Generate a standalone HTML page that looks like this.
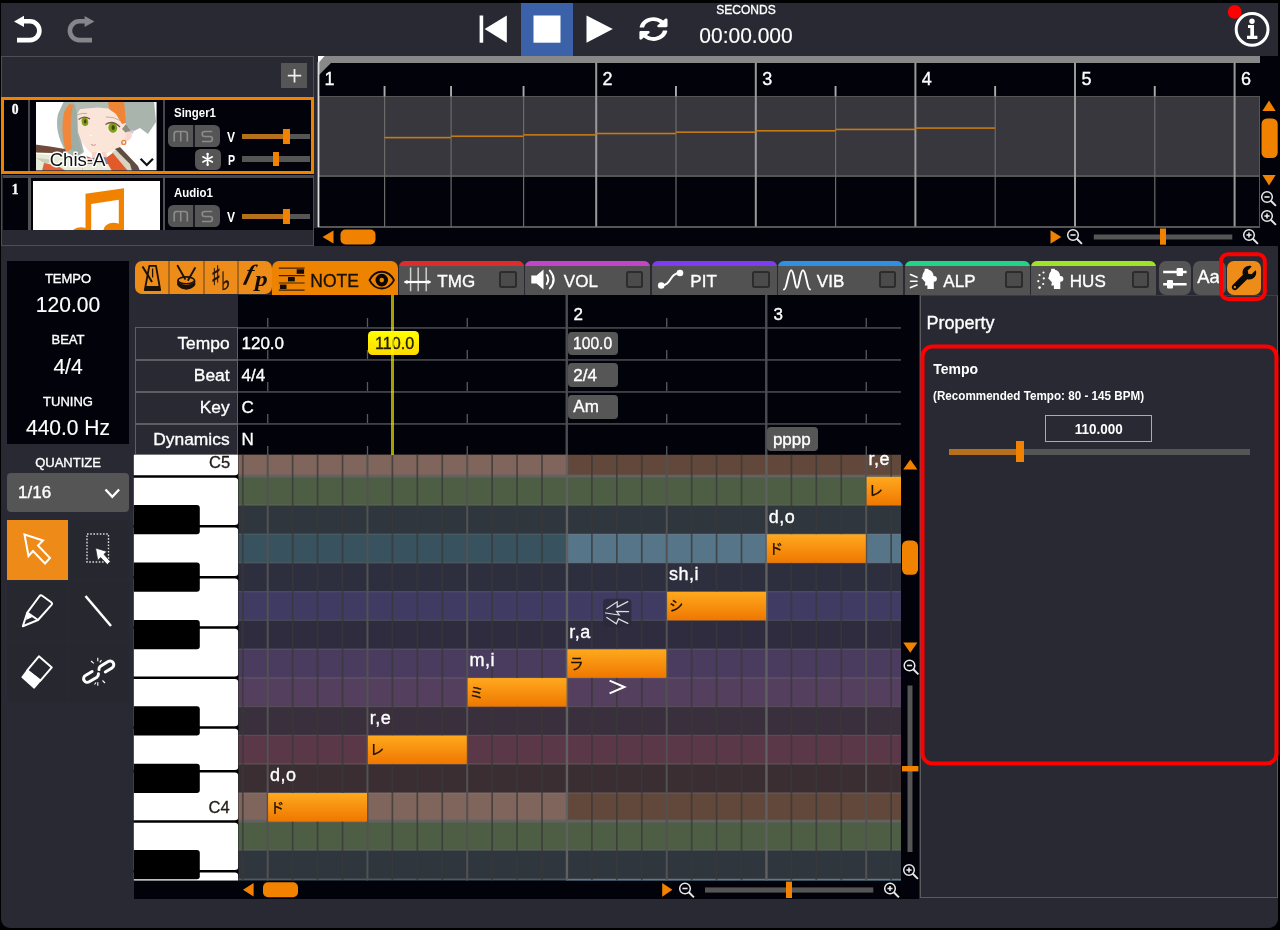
<!DOCTYPE html><html><head><meta charset="utf-8"><title>Editor</title><style>
*{box-sizing:border-box;margin:0;padding:0}
html,body{width:1280px;height:930px;overflow:hidden;background:#000003}
body{font-family:"Liberation Sans","Noto Sans CJK JP",sans-serif;color:#fff;position:relative}
.a{position:absolute}
#app{position:absolute;left:1.4px;top:2.6px;width:1277px;height:925.3px;background:#282932;border-radius:0 0 9px 9px;overflow:hidden}
.t{position:absolute;white-space:nowrap;line-height:1;-webkit-text-stroke:0.35px currentColor}
text.w{stroke:#fff;stroke-width:0.35px}
text.d{stroke:#1a1000;stroke-width:0.3px}
.c{text-align:center}
.blk{background:#02020a}
svg{position:absolute;overflow:visible}
</style></head><body>
<div id="root" style="position:absolute;left:0;top:0;width:1280px;height:930px;will-change:transform">
<div id="app"></div>
<div class="a" style="left:521px;top:3px;width:52px;height:52.5px;background:#3b62a8;"></div>
<svg style="left:0;top:0" width="1280" height="60" viewBox="0 0 1280 60">
<g fill="none" stroke="#fff" stroke-width="4.6">
<path d="M23 21.3 H30 A9.4 9.4 0 0 1 30 40.1 H17"/>
</g>
<path d="M14 21.4 L24 15.8 V27 Z" fill="#fff"/>
<g fill="none" stroke="#85858c" stroke-width="4.6">
<path d="M85.5 21.3 H79.3 A9.4 9.4 0 0 0 79.3 40.1 H92"/>
</g>
<path d="M94.4 21.4 L84.6 16 V27 Z" fill="#85858c"/>
<rect x="479.6" y="15.5" width="3.6" height="27.2" fill="#fff"/>
<path d="M484.6 29.1 L506.8 15.5 V42.7 Z" fill="#fff"/>
<rect x="533.5" y="15.5" width="27" height="27.2" fill="#fff"/>
<path d="M586.5 15.5 L612.8 29.1 L586.5 42.7 Z" fill="#fff"/>
<g transform="translate(638.95,16.9) scale(0.0567,0.0476)" fill="#fff"><path d="M370.72 133.28C339.458 104.008 298.888 87.962 255.848 88c-77.458.068-144.328 53.178-162.791 126.85-1.344 5.363-6.122 9.15-11.651 9.15H24.103c-7.498 0-13.194-6.807-11.807-14.176C33.933 94.924 134.813 8 256 8c66.448 0 126.791 26.136 171.315 68.685L463.03 40.97C478.149 25.851 504 36.559 504 57.941V192c0 13.255-10.745 24-24 24H345.941c-21.382 0-32.09-25.851-16.971-40.971l41.75-41.749zM32 296h134.059c21.382 0 32.09 25.851 16.971 40.971l-41.75 41.75c31.262 29.273 71.835 45.319 114.876 45.28 77.418-.07 144.315-53.144 162.787-126.849 1.344-5.363 6.122-9.15 11.651-9.15h57.304c7.498 0 13.194 6.807 11.807 14.176C478.067 417.076 377.187 504 256 504c-66.448 0-126.791-26.136-171.315-68.685L48.97 471.03C33.851 486.149 8 475.441 8 454.059V320c0-13.255 10.745-24 24-24z"/></g>
<circle cx="1234.7" cy="11.9" r="6.9" fill="#ff0000"/>
<circle cx="1252.1" cy="29.4" r="15.9" fill="none" stroke="#fff" stroke-width="3"/>
<circle cx="1252" cy="21.3" r="2.7" fill="#fff"/>
<path d="M1248 25 H1254 V35.8 H1257.4 V39 H1247 V35.8 H1250.3 V28 H1248 Z" fill="#fff"/>
</svg>
<div class="t" style="left:686px;top:4px;font-size:12px;color:#fff;width:120px;text-align:center;">SECONDS</div>
<div class="t" style="left:686px;top:24.9px;font-size:22px;color:#fff;width:120px;text-align:center;-webkit-text-stroke:0.15px #fff;transform:scaleX(0.955);">00:00.000</div>
<div class="a" style="left:1.2px;top:56px;width:313.2px;height:189.8px;background:transparent;border:1.5px solid #4e4e52;border-top-width:1.2px"></div>
<div class="a" style="left:281.4px;top:63.1px;width:25.4px;height:25.2px;background:#555;"></div>
<svg style="left:281.5px;top:63px" width="25" height="25"><path d="M12.5 6 V19.5 M5.8 12.7 H19.2" stroke="#eee" stroke-width="1.8" fill="none"/></svg>
<div class="a" style="left:2px;top:97px;width:312px;height:77.5px;background:#02020a;"></div>
<div class="a" style="left:28.1px;top:100px;width:2.2px;height:72px;background:#45454a;"></div>
<div class="a" style="left:162.7px;top:100px;width:2px;height:72px;background:#45454a;"></div>
<svg style="left:36.1px;top:101.6px" width="120.6" height="68.2" viewBox="0 0 120.6 68.2">
<defs><clipPath id="av"><rect width="120.6" height="68.2"/></clipPath><filter id="bl" x="-5%" y="-5%" width="110%" height="110%"><feGaussianBlur stdDeviation="0.55"/></filter></defs>
<rect width="120.6" height="68.2" fill="#fff"/>
<g clip-path="url(#av)"><g filter="url(#bl)">
<path d="M28 -1 L50 -1 L46 10 L43 30 L48 50 L40 56 L30 50 Q18 30 22 12 Z" fill="#a9b6ad"/>
<path d="M33 2 L38 3 Q33 22 36 47 L30 50 Q24 30 28 10 Z" fill="#f0873a"/>
<path d="M37 2 L43 6 L41 30 L46 50 L41 54 L36 47 Q33 24 37 2 Z" fill="#9dada5"/>
<path d="M41 8 Q56 2 74 6 L90 22 L92 36 Q84 48 66 53 L56 52 Q46 44 42 30 Z" fill="#fbe5d9"/>
<path d="M56 50 L70 50 L72 58 L56 58 Z" fill="#f4d4c4"/>
<path d="M38 -1 L80 -1 L78 7 L62 5.5 L44 7 L41 12 Z" fill="#b2bcb2"/>
<path d="M72 -1 L90 -1 L90 21 L86 22 L80 12 L73 7 Z" fill="#f08434"/>
<path d="M88 -1 L118 -1 L120 20 L112 32 L104 26 L96 30 L90 22 Z" fill="#a9b5ac"/>
<path d="M90 22 L96 30 L92 33 L86 27 Z" fill="#8d8e80"/>
<path d="M90 30 Q96 28 96 34 Q94 40 89 39 Z" fill="#f6d9cc"/>
<path d="M93 29 L98 28 L97 32 Z" fill="#d8c8e8"/>
<ellipse cx="48.9" cy="19.6" rx="3.3" ry="4.4" fill="#80a01c" transform="rotate(-10 48.9 19.6)"/>
<ellipse cx="76.8" cy="25.8" rx="4.4" ry="5" fill="#7e9e1a" transform="rotate(-10 76.8 25.8)"/>
<ellipse cx="49.2" cy="19.4" rx="1.3" ry="2.2" fill="#3c4a10"/>
<ellipse cx="77.2" cy="25.6" rx="1.6" ry="2.5" fill="#3c4a10"/>
<path d="M42.6 17.5 Q48 12.8 54 17" stroke="#7a5546" stroke-width="1.2" fill="none"/>
<path d="M69.5 22.5 Q77 17.6 84 25" stroke="#7a5546" stroke-width="1.3" fill="none"/>
<path d="M41 13 Q46 10.5 51 11.5" stroke="#a0a89c" stroke-width="0.8" fill="none"/>
<path d="M70 15 Q78 14.5 84 18.5" stroke="#a0a89c" stroke-width="0.8" fill="none"/>
<circle cx="54.8" cy="33.3" r="0.9" fill="#fff"/>
<path d="M55 42.6 q2.4 1.4 4.8 0.2" stroke="#d48c84" stroke-width="1" fill="none"/>
<circle cx="87.8" cy="40.4" r="2" fill="none" stroke="#e8813c" stroke-width="1.3"/>
<path d="M-1 42.6 L14 44.4 L29 47 L31 52 L16 51 L-1 50.6 Z" fill="#6f4c3b"/>
<path d="M-1 52 L20 53 L40 56 L52 60 L52 69 L-1 69 Z" fill="#e6ead6"/>
<path d="M0 56 L18 58 L10 62 Z" fill="#c8ccb8"/>
<path d="M8 61 L22 64 L30 69 L6 69 Z" fill="#e0623a"/>
<path d="M50 54 L58 57 L70 56 L78 50 L92 60 L96 69 L46 69 Z" fill="#e25a2c"/>
<path d="M56 56 L70 55 L72 61 L56 62 Z" fill="#8a80a8"/>
<path d="M48 62 L72 62 L76 69 L46 69 Z" fill="#e9ecd9"/>
<path d="M79 47 L84 45 L102 64 L104 69 L96 69 L90 60 Z" fill="#5e4d42"/>
<path d="M76 50 L80 48 L94 62 L96 69 L92 69 Z" fill="#d8d4c4"/>
</g>
<text x="13.7" y="64.3" font-family="Liberation Sans, sans-serif" font-size="18.6" fill="#111" stroke="#fff" stroke-width="2.8" stroke-linejoin="round" paint-order="stroke">Chis-A</text>
<path d="M104.6 56.8 L110.8 63 L117 56.8" stroke="#111" stroke-width="2.2" fill="none"/>
</g></svg>
<div class="a" style="left:1px;top:96.6px;width:313.2px;height:77.4px;border:3px solid #f08200;"></div>
<div class="t" style="left:11.8px;top:103.3px;font-size:13.6px;color:#fff;font-family:'Liberation Serif',serif;font-weight:bold;">0</div>
<div class="t" style="left:174.3px;top:106.3px;font-size:13px;font-weight:bold;-webkit-text-stroke:0;transform-origin:0 0;transform:scaleX(0.88)">Singer1</div>
<div class="a" style="left:168px;top:125.3px;width:52.2px;height:21.8px;background:#555;border-radius:5.5px"></div>
<div class="a" style="left:192.7px;top:125.3px;width:2px;height:21.8px;background:#1c1c22;"></div>
<svg style="left:168px;top:125.3px" width="53" height="22"><g fill="none" stroke="#8c8c8c" stroke-width="1.6" stroke-linejoin="round"><path d="M6.2 16.4 V9 Q6.2 6.5 8.7 6.5 H16.8 Q19.3 6.5 19.3 9 V16.4 M12.75 6.5 V16.4"/><path d="M44.2 6.5 H36.6 Q34.2 6.5 34.2 9 Q34.2 11.5 36.6 11.5 H42 Q44.4 11.5 44.4 14 Q44.4 16.5 42 16.5 H34"/></g></svg>
<div class="a" style="left:195.2px;top:148.6px;width:25.4px;height:21.4px;background:#555;border-radius:5.5px"></div>
<svg style="left:195px;top:148.5px" width="26" height="21"><g stroke="#fff" stroke-width="1.7" fill="none" stroke-linecap="round"><path d="M12.6 5 V15.8 M7.9 7.8 L17.3 13 M17.3 7.8 L7.9 13"/></g><circle cx="12.6" cy="5" r="1.2" fill="#fff"/><circle cx="12.6" cy="15.8" r="1.2" fill="#fff"/></svg>
<div class="t" style="left:227px;top:130px;font-size:14.4px;font-weight:bold;-webkit-text-stroke:0;transform-origin:0 0;transform:scaleX(0.84)">V</div>
<div class="t" style="left:227.6px;top:152.6px;font-size:14.4px;font-weight:bold;-webkit-text-stroke:0;transform-origin:0 0;transform:scaleX(0.74)">P</div>
<div class="a" style="left:242px;top:134px;width:68px;height:5.4px;background:#555;"></div>
<div class="a" style="left:242px;top:134px;width:42px;height:5.4px;background:#b5701e;"></div>
<div class="a" style="left:283.2px;top:129.45px;width:6.8px;height:14.5px;background:#f08200;"></div>
<div class="a" style="left:242px;top:156.2px;width:68px;height:5.4px;background:#555;"></div>
<div class="a" style="left:272.6px;top:151.79999999999998px;width:6.8px;height:14.2px;background:#f08200;"></div>
<div class="a" style="left:2.5px;top:174.5px;width:310.5px;height:3.4px;background:#47474c;"></div>
<div class="a" style="left:3px;top:177.6px;width:310px;height:52.4px;background:#02020a;"></div>
<div class="a" style="left:28.1px;top:177px;width:2.6px;height:53px;background:#505055;"></div>
<div class="a" style="left:162.6px;top:177px;width:2.6px;height:53px;background:#505055;"></div>
<div class="t" style="left:11.8px;top:182.6px;font-size:13.6px;color:#fff;font-family:'Liberation Serif',serif;font-weight:bold;">1</div>
<div class="a" style="left:33px;top:180.5px;width:127px;height:49.5px;background:#fff;overflow:hidden"><svg style="left:0;top:0" width="127" height="50" viewBox="33 180.5 127 50"><path fill="#f08200" d="M85.5 193.3 L124 187.8 V231 H118.8 V199.3 L91.2 203.4 V236 H85.5 Z"/><ellipse cx="81" cy="234.5" rx="10.3" ry="7.8" fill="#f08200"/><ellipse cx="113.7" cy="230" rx="10.3" ry="7.8" fill="#f08200"/></svg></div>
<div class="t" style="left:174.3px;top:186px;font-size:13px;font-weight:bold;-webkit-text-stroke:0;transform-origin:0 0;transform:scaleX(0.88)">Audio1</div>
<div class="a" style="left:168px;top:205.2px;width:52.2px;height:21.8px;background:#555;border-radius:5.5px"></div>
<div class="a" style="left:192.7px;top:205.2px;width:2px;height:21.8px;background:#1c1c22;"></div>
<svg style="left:168px;top:205.2px" width="53" height="22"><g fill="none" stroke="#8c8c8c" stroke-width="1.6" stroke-linejoin="round"><path d="M6.2 16.4 V9 Q6.2 6.5 8.7 6.5 H16.8 Q19.3 6.5 19.3 9 V16.4 M12.75 6.5 V16.4"/><path d="M44.2 6.5 H36.6 Q34.2 6.5 34.2 9 Q34.2 11.5 36.6 11.5 H42 Q44.4 11.5 44.4 14 Q44.4 16.5 42 16.5 H34"/></g></svg>
<div class="t" style="left:227px;top:209.7px;font-size:14.4px;font-weight:bold;-webkit-text-stroke:0;transform-origin:0 0;transform:scaleX(0.84)">V</div>
<div class="a" style="left:242px;top:213.6px;width:68px;height:5.4px;background:#555;"></div>
<div class="a" style="left:242px;top:213.6px;width:42px;height:5.4px;background:#b5701e;"></div>
<div class="a" style="left:283.2px;top:209.04999999999998px;width:6.8px;height:14.5px;background:#f08200;"></div>
<div class="a" style="left:317.8px;top:56px;width:962.2px;height:172px;background:#02020a;"></div>
<div class="a" style="left:314.2px;top:227.5px;width:965.8px;height:18.5px;background:#02020a;"></div>
<div class="a" style="left:318px;top:56px;width:942px;height:6.5px;background:#888;"></div>
<div class="a" style="left:318px;top:97px;width:941.5px;height:78.5px;background:#38373e;"></div>
<div class="a" style="left:318px;top:96px;width:941.5px;height:1px;background:#555;"></div>
<div class="a" style="left:318px;top:175px;width:941.5px;height:1.5px;background:#555;"></div>
<div class="a" style="left:318px;top:226px;width:941.5px;height:1.5px;background:#555;"></div>
<div class="a" style="left:1259px;top:97px;width:1px;height:130px;background:#555;"></div>
<svg style="left:0;top:0" width="1280" height="250" viewBox="0 0 1280 250"><path d="M318 56 H338 L318 76 Z" fill="#888"/><path d="M318 56 H324.5 L318 63.5 Z" fill="#fff"/><rect x="317.6" y="62" width="1.8" height="165" fill="#ddd"/><text class="w" x="324.5" y="85" font-size="18" fill="#fff" font-family="Liberation Sans, sans-serif">1</text><rect x="384.0" y="97" width="1.2" height="130" fill="#6a6a6a"/><rect x="383.6" y="86" width="1.9" height="10.5" fill="#aaa"/><rect x="450.5" y="97" width="1.2" height="130" fill="#6a6a6a"/><rect x="450.1" y="86" width="1.9" height="10.5" fill="#aaa"/><rect x="523.0" y="97" width="1.2" height="130" fill="#6a6a6a"/><rect x="522.6" y="86" width="1.9" height="10.5" fill="#aaa"/><rect x="595.2" y="62.5" width="2" height="164" fill="#999"/><text class="w" x="602.6" y="85" font-size="18" fill="#fff" font-family="Liberation Sans, sans-serif">2</text><rect x="675.4" y="97" width="1.2" height="130" fill="#6a6a6a"/><rect x="675.0" y="86" width="1.9" height="10.5" fill="#aaa"/><rect x="754.8" y="62.5" width="2" height="164" fill="#999"/><text class="w" x="762.2" y="85" font-size="18" fill="#fff" font-family="Liberation Sans, sans-serif">3</text><rect x="835.0" y="97" width="1.2" height="130" fill="#6a6a6a"/><rect x="834.6" y="86" width="1.9" height="10.5" fill="#aaa"/><rect x="914.4" y="62.5" width="2" height="164" fill="#999"/><text class="w" x="921.8" y="85" font-size="18" fill="#fff" font-family="Liberation Sans, sans-serif">4</text><rect x="994.6" y="97" width="1.2" height="130" fill="#6a6a6a"/><rect x="994.2" y="86" width="1.9" height="10.5" fill="#aaa"/><rect x="1074.0" y="62.5" width="2" height="164" fill="#999"/><text class="w" x="1081.4" y="85" font-size="18" fill="#fff" font-family="Liberation Sans, sans-serif">5</text><rect x="1154.2" y="97" width="1.2" height="130" fill="#6a6a6a"/><rect x="1153.8" y="86" width="1.9" height="10.5" fill="#aaa"/><rect x="1233.6" y="62.5" width="2" height="164" fill="#999"/><text class="w" x="1241.0" y="85" font-size="18" fill="#fff" font-family="Liberation Sans, sans-serif">6</text><rect x="384.5" y="136.79999999999998" width="66.5" height="1.6" fill="#c87a12"/><rect x="451.0" y="135.43999999999997" width="72.5" height="1.6" fill="#c87a12"/><rect x="523.5" y="134.07999999999998" width="72.6" height="1.6" fill="#c87a12"/><rect x="596.1" y="132.71999999999997" width="79.8" height="1.6" fill="#c87a12"/><rect x="675.9" y="131.35999999999999" width="79.8" height="1.6" fill="#c87a12"/><rect x="755.7" y="129.99999999999997" width="79.8" height="1.6" fill="#c87a12"/><rect x="835.5" y="128.64" width="79.8" height="1.6" fill="#c87a12"/><rect x="915.3" y="127.27999999999999" width="79.8" height="1.6" fill="#c87a12"/></svg>
<svg style="left:0;top:0" width="1280" height="250" viewBox="0 0 1280 250">
<path d="M322.5 237 L333.5 230.5 V243.5 Z" fill="#f08200"/>
<rect x="340.5" y="229.5" width="35" height="15" rx="5" fill="#f08200"/>
<path d="M1061.3 237 L1050.5 230.3 V243.7 Z" fill="#f08200"/>
<rect x="1093.8" y="234.5" width="138.5" height="5" fill="#555"/>
<rect x="1160" y="228.5" width="6" height="16.2" fill="#f08200"/>
<path d="M1269 100.5 L1275.6 111 H1262.4 Z" fill="#f08200"/>
<rect x="1261.5" y="118.5" width="16.2" height="39.5" rx="5.5" fill="#f08200"/>
<path d="M1269 185.5 L1275.6 175 H1262.4 Z" fill="#f08200"/>
</svg>
<svg style="left:0;top:0" width="1280" height="930" viewBox="0 0 1280 930"><g stroke="#e8e8e8" fill="none" stroke-width="1.5"><circle cx="1073" cy="235" r="5.3"/><path d="M1076.816 238.816 L1081.8999999999999 243.9" stroke-width="2"/><path d="M1070.4 235 H1075.6" stroke-width="1.6"/></g></svg>
<svg style="left:0;top:0" width="1280" height="930" viewBox="0 0 1280 930"><g stroke="#e8e8e8" fill="none" stroke-width="1.5"><circle cx="1249" cy="235" r="5.3"/><path d="M1252.816 238.816 L1257.8999999999999 243.9" stroke-width="2"/><path d="M1246.4 235 H1251.6" stroke-width="1.6"/><path d="M1249 232.4 V237.6" stroke-width="1.6"/></g></svg>
<svg style="left:0;top:0" width="1280" height="930" viewBox="0 0 1280 930"><g stroke="#e8e8e8" fill="none" stroke-width="1.5"><circle cx="1267" cy="197" r="5.3"/><path d="M1270.816 200.816 L1275.8999999999999 205.9" stroke-width="2"/><path d="M1264.4 197 H1269.6" stroke-width="1.6"/></g></svg>
<svg style="left:0;top:0" width="1280" height="930" viewBox="0 0 1280 930"><g stroke="#e8e8e8" fill="none" stroke-width="1.5"><circle cx="1267" cy="216" r="5.3"/><path d="M1270.816 219.816 L1275.8999999999999 224.9" stroke-width="2"/><path d="M1264.4 216 H1269.6" stroke-width="1.6"/><path d="M1267 213.4 V218.6" stroke-width="1.6"/></g></svg>
<div class="a" style="left:7px;top:261px;width:122px;height:183px;background:#02020a;"></div>
<div class="t c" style="left:-32px;top:271.6px;width:200px;font-size:13px;">TEMPO</div>
<div class="t c" style="left:-32px;top:294.3px;width:200px;font-size:22px;-webkit-text-stroke:0.15px #fff;transform:scaleX(0.955);">120.00</div>
<div class="t c" style="left:-32px;top:333.3px;width:200px;font-size:13px;">BEAT</div>
<div class="t c" style="left:-32px;top:355.5px;width:200px;font-size:22px;-webkit-text-stroke:0.15px #fff;transform:scaleX(0.955);">4/4</div>
<div class="t c" style="left:-32px;top:394.5px;width:200px;font-size:13px;">TUNING</div>
<div class="t c" style="left:-32px;top:416.8px;width:200px;font-size:22px;-webkit-text-stroke:0.15px #fff;transform:scaleX(0.955);">440.0 Hz</div>
<div class="t c" style="left:-32px;top:455.8px;width:200px;font-size:13px;">QUANTIZE</div>
<div class="a" style="left:7px;top:472.5px;width:122px;height:39.5px;background:#555;border-radius:4px"></div>
<div class="t" style="left:18px;top:484px;font-size:17px;color:#fff;">1/16</div>
<svg style="left:0;top:0" width="140" height="720" viewBox="0 0 140 720"><path d="M105.5 489.5 L112.3 496.8 L119.1 489.5" stroke="#fff" stroke-width="2.4" fill="none"/></svg>
<div class="a" style="left:7px;top:519.5px;width:60.5px;height:60px;background:#26272f;"></div>
<div class="a" style="left:68.5px;top:519.5px;width:60.5px;height:60px;background:#26272f;"></div>
<div class="a" style="left:7px;top:580.5px;width:60.5px;height:60px;background:#26272f;"></div>
<div class="a" style="left:68.5px;top:580.5px;width:60.5px;height:60px;background:#26272f;"></div>
<div class="a" style="left:7px;top:641.5px;width:60.5px;height:60px;background:#26272f;"></div>
<div class="a" style="left:68.5px;top:641.5px;width:60.5px;height:60px;background:#26272f;"></div>
<div class="a" style="left:7px;top:519.5px;width:60.5px;height:60px;background:#ee8a18;"></div>
<svg style="left:0;top:0" width="140" height="720" viewBox="0 0 140 720">
<g fill="none" stroke="#fff" stroke-width="2" stroke-linejoin="miter">
<path d="M24.5 534.5 L43 540.5 L38 545.5 L50 558 L45 563.5 L33 551 L28.5 556 Z"/>
</g>
<rect x="87" y="534" width="21.5" height="28" fill="none" stroke="#ddd" stroke-width="1.4" stroke-dasharray="1.6 1.6"/>
<path d="M95.5 548 L107 551.5 L104 554.3 L110.3 561.5 L107.3 564.6 L100.6 557.6 L97.8 560.5 Z" fill="#fff" stroke="#292a32" stroke-width="0.8"/>
<g fill="none" stroke="#fff" stroke-width="2" stroke-linejoin="round">
<path d="M27.3 612.6 L39.6 596 Q40.8 594.6 42.2 595.7 L51.2 602.3 Q52.6 603.4 51.5 604.8 L38 620 Z"/>
<path d="M27.3 612.6 L22.8 626.2 L38 620"/>
</g>
<path d="M27.3 613 L32.5 617 L26 620 Z" fill="#fff"/>
<path d="M85.5 596 L111 626" stroke="#fff" stroke-width="2.6" fill="none"/>
<path d="M27.2 670.4 L38.9 656.3 L51.8 667.4 L40.4 680.6 Z" fill="none" stroke="#fff" stroke-width="2" stroke-linejoin="round"/>
<path d="M27.2 670.4 L40.4 680.6 L34.2 687.8 L22.2 677.2 Z" fill="#fff" stroke="#fff" stroke-width="1.6" stroke-linejoin="round"/>
<g fill="none" stroke="#fff" stroke-width="3" stroke-linecap="round">
<g transform="translate(90.4,676.8) rotate(-31)"><path d="M4.2 -3.7 H-3.6 A3.7 3.7 0 0 0 -3.6 3.7 H5.4 A3.7 3.7 0 0 0 8.4 1.6"/></g>
<g transform="translate(107,666.6) rotate(-31)"><path d="M-4.2 3.7 H3.6 A3.7 3.7 0 0 0 3.6 -3.7 H-5.4 A3.7 3.7 0 0 0 -8.4 -1.6"/></g>
</g>
<g stroke="#fff" stroke-width="1.1" fill="none"><path d="M91 661 L93.8 663.4 M97.8 657.8 V661.2 M101.5 660 L99.8 662.4 M97.8 682.2 V685.8 M102.5 680.5 L105 683 M94.5 684.5 L96 682.5"/></g>
</svg>
<div class="a" style="left:135px;top:261.3px;width:136.5px;height:33.2px;background:#ee8c1a;border-radius:7px"></div>
<div class="a" style="left:168px;top:261.3px;width:1.8px;height:33.2px;background:#a8681c;"></div>
<div class="a" style="left:202.8px;top:261.3px;width:1.8px;height:33.2px;background:#a8681c;"></div>
<div class="a" style="left:237.2px;top:261.3px;width:1.8px;height:33.2px;background:#a8681c;"></div>
<div class="a" style="left:272.3px;top:261px;width:125.4px;height:34px;background:#ee8300;border-radius:7px 7px 0 0"></div>
<svg style="left:0;top:0" width="1280" height="310" viewBox="0 0 1280 310">
<g stroke="#1a1208" fill="none" stroke-width="1.8" stroke-linejoin="round">
<path d="M149.3 265.8 H156 L160.2 290 H144.8 Z"/>
<path d="M142.5 266.5 L152 282" stroke-width="2"/>
<path d="M152.6 268.5 V277.5" stroke-width="1.3"/>
</g>
<path d="M145.6 286 H159.5 L160.4 290.8 H144.6 Z" fill="#1a1208"/>
<g stroke="#1a1208" fill="none" stroke-width="1.9" stroke-linecap="round">
<path d="M177.6 265.8 L185 278.8"/><path d="M195 268 L188.2 280"/>
<ellipse cx="186.2" cy="280.3" rx="8.3" ry="3.4" stroke-width="1.6"/>
</g>
<path d="M177.6 282 Q186.2 288 194.9 282 V285.8 Q186.2 293.5 177.6 285.8 Z" fill="#1a1208"/>
<path d="M177.9 280.5 V285" stroke="#1a1208" stroke-width="1.4"/><path d="M194.6 280.5 V285" stroke="#1a1208" stroke-width="1.4"/>
<!-- note icon -->
<g stroke="#3a2408" stroke-width="1.2"><path d="M278.8 268.1 H304.6 M278.8 275.7 H304.6 M278.8 283 H304.6 M278.8 290.2 H304.6"/></g>
<rect x="296.7" y="269.3" width="7.4" height="4.5" fill="#140c04"/>
<rect x="288" y="277" width="6.8" height="4.4" fill="#140c04"/>
<rect x="279.9" y="284.6" width="6.6" height="4.4" fill="#140c04"/>
</svg>
<div class="t" style="left:211.3px;top:263.2px;font-size:26.7px;color:#1a1208;font-family:'DejaVu Sans',sans-serif;-webkit-text-stroke:0.5px #1a1208;transform-origin:0 0;transform:scaleX(0.77)">♯</div>
<div class="t" style="left:220.6px;top:269.1px;font-size:25.3px;color:#1a1208;font-family:'DejaVu Sans',sans-serif;-webkit-text-stroke:0.5px #1a1208;transform-origin:0 0;transform:scaleX(0.8)">♭</div>
<div class="t" style="left:243.2px;top:261.8px;font-size:22px;color:#140c04;font-family:'Liberation Serif',serif;font-style:italic;font-weight:bold;-webkit-text-stroke:0;transform-origin:0 100%;transform:skewX(-14deg) scaleX(1.12)">f</div>
<div class="t" style="left:254.6px;top:268.4px;font-size:22px;color:#140c04;font-family:'Liberation Serif',serif;font-style:italic;font-weight:bold;-webkit-text-stroke:0;transform-origin:0 0;transform:scaleX(1.15)">p</div>
<div class="t" style="left:310.3px;top:273.4px;font-size:17.5px;color:#1a1208;">NOTE</div>
<svg style="left:0;top:0" width="1280" height="310" viewBox="0 0 1280 310"><path d="M369.5 280.1 C375.3 268.9 388.2 268.9 394 280.1 C388.2 291.3 375.3 291.3 369.5 280.1 Z" fill="none" stroke="#140c04" stroke-width="1.9" stroke-linejoin="round"/><circle cx="381.75" cy="280.1" r="4.3" fill="none" stroke="#0a0602" stroke-width="4"/></svg>
<div class="a" style="left:398.75px;top:260.6px;width:124.8px;height:34.2px;background:#525252;border-radius:6px 6px 0 0;overflow:hidden"><div class="a" style="left:0;top:0;width:100%;height:5.6px;background:#de2c2c"></div></div>
<div class="t" style="left:437.35px;top:272.6px;font-size:17px;color:#fff;">TMG</div>
<div class="a" style="left:499.35px;top:270.6px;width:17.6px;height:17.6px;background:#4b4b4b;border:2px solid #2c2c2c;border-radius:2.5px"></div>
<div class="a" style="left:525.25px;top:260.6px;width:124.8px;height:34.2px;background:#525252;border-radius:6px 6px 0 0;overflow:hidden"><div class="a" style="left:0;top:0;width:100%;height:5.6px;background:#c344c6"></div></div>
<div class="t" style="left:563.85px;top:272.6px;font-size:17px;color:#fff;">VOL</div>
<div class="a" style="left:625.85px;top:270.6px;width:17.6px;height:17.6px;background:#4b4b4b;border:2px solid #2c2c2c;border-radius:2.5px"></div>
<div class="a" style="left:651.75px;top:260.6px;width:124.8px;height:34.2px;background:#525252;border-radius:6px 6px 0 0;overflow:hidden"><div class="a" style="left:0;top:0;width:100%;height:5.6px;background:#7d3cf2"></div></div>
<div class="t" style="left:690.35px;top:272.6px;font-size:17px;color:#fff;">PIT</div>
<div class="a" style="left:752.35px;top:270.6px;width:17.6px;height:17.6px;background:#4b4b4b;border:2px solid #2c2c2c;border-radius:2.5px"></div>
<div class="a" style="left:778.25px;top:260.6px;width:124.8px;height:34.2px;background:#525252;border-radius:6px 6px 0 0;overflow:hidden"><div class="a" style="left:0;top:0;width:100%;height:5.6px;background:#2f8fe0"></div></div>
<div class="t" style="left:816.85px;top:272.6px;font-size:17px;color:#fff;">VIB</div>
<div class="a" style="left:878.85px;top:270.6px;width:17.6px;height:17.6px;background:#4b4b4b;border:2px solid #2c2c2c;border-radius:2.5px"></div>
<div class="a" style="left:904.75px;top:260.6px;width:124.8px;height:34.2px;background:#525252;border-radius:6px 6px 0 0;overflow:hidden"><div class="a" style="left:0;top:0;width:100%;height:5.6px;background:#1fd486"></div></div>
<div class="t" style="left:943.35px;top:272.6px;font-size:17px;color:#fff;">ALP</div>
<div class="a" style="left:1005.35px;top:270.6px;width:17.6px;height:17.6px;background:#4b4b4b;border:2px solid #2c2c2c;border-radius:2.5px"></div>
<div class="a" style="left:1031.25px;top:260.6px;width:124.8px;height:34.2px;background:#525252;border-radius:6px 6px 0 0;overflow:hidden"><div class="a" style="left:0;top:0;width:100%;height:5.6px;background:#9fe425"></div></div>
<div class="t" style="left:1069.85px;top:272.6px;font-size:17px;color:#fff;">HUS</div>
<div class="a" style="left:1131.85px;top:270.6px;width:17.6px;height:17.6px;background:#4b4b4b;border:2px solid #2c2c2c;border-radius:2.5px"></div>
<svg style="left:0;top:0" width="1280" height="310" viewBox="0 0 1280 310">
<g stroke="#cfcfcf" stroke-width="1.5" fill="none"><path d="M410.6 267.5 V291.2 M418.2 267.5 V291.2 M426.2 267.5 V291.2"/></g>
<path d="M404.5 282 H430.5" stroke="#fff" stroke-width="2.2"/><path d="M404 282 L407.5 279.8 V284.2 Z M431 282 L427.5 279.8 V284.2 Z" fill="#fff"/>
<path d="M531.3 275.5 H536.5 L543.5 269.6 V289.4 L536.5 283.5 H531.3 Z" fill="#fff"/>
<g stroke="#fff" fill="none" stroke-width="2" stroke-linecap="round"><path d="M546.8 275 Q549.6 279.5 546.8 284"/><path d="M549.8 270.6 Q557.5 279.5 549.8 288.4"/></g>
<g stroke="#fff" fill="none" stroke-width="2"><path d="M661.2 285.5 C672 285.5 669 273 680 273"/></g>
<circle cx="661.2" cy="285.5" r="3.3" fill="#fff"/><circle cx="680" cy="273" r="3.3" fill="#fff"/>
<path d="M784 289.5 C787 289.5 788 270.2 791.2 270.2 C794.4 270.2 794.6 287.8 797 287.8 C799.4 287.8 799.8 270.2 803 270.2 C806.2 270.2 807 289.5 810 289.5" stroke="#fff" stroke-width="2" fill="none" stroke-linecap="round"/>
<g stroke="#fff" stroke-width="1.6" stroke-linecap="round"><path d="M910.5 274.6 L917 277.2 M910.5 281.2 H917 M910.5 287.6 L917 285"/></g>
<g transform="translate(921,268.8)" fill="#fff"><ellipse cx="7" cy="7.6" rx="5.6" ry="6.6"/><path d="M3.6 0 H7.4 V4 H3.6 Z"/><circle cx="13" cy="10" r="2.9"/><path d="M4.6 12 H12.8 V20.2 H6.4 V16.6 H3.8 Z"/><path d="M0.2 9.2 L3 7.5 V11.5 Z"/></g>
<g fill="#fff"><circle cx="1039.5" cy="275" r="1.1"/><circle cx="1043.5" cy="272.5" r="1.1"/><circle cx="1043.8" cy="278.4" r="1.1"/><circle cx="1038.3" cy="281.2" r="1.1"/><circle cx="1043.2" cy="284" r="1.1"/><circle cx="1039.6" cy="287.6" r="1.3"/></g>
<g transform="translate(1047.5,268.8)" fill="#fff"><ellipse cx="7" cy="7.6" rx="5.6" ry="6.6"/><path d="M3.6 0 H7.4 V4 H3.6 Z"/><circle cx="13" cy="10" r="2.9"/><path d="M4.6 12 H12.8 V20.2 H6.4 V16.6 H3.8 Z"/><path d="M0.2 9.2 L3 7.5 V11.5 Z"/></g>
</svg>
<div class="a" style="left:1158.6px;top:261.3px;width:32.6px;height:33.3px;background:#555;border-radius:7px"></div>
<div class="a" style="left:1193.2px;top:261.3px;width:33px;height:33.3px;background:#555;border-radius:7px"></div>
<div class="t" style="left:1197.2px;top:268.4px;font-size:18.4px;color:#fff;">Aa</div>
<div class="a" style="left:1227.2px;top:261.3px;width:34px;height:33.3px;background:#ee8c1a;border-radius:7px"></div>
<svg style="left:0;top:0" width="1280" height="310" viewBox="0 0 1280 310">
<g stroke="#fff" stroke-width="2.6"><path d="M1163.2 272 H1186.6 M1163.2 284.2 H1186.6"/></g>
<rect x="1176.6" y="267.9" width="6.4" height="8.2" rx="1" fill="#fff"/><rect x="1167" y="280" width="6" height="8.4" rx="1" fill="#fff"/>
<g transform="translate(1231.8,265.8) scale(0.0477)"><path fill="#0a0a0a" d="M507.73 109.1c-2.24-9.03-13.54-12.09-20.12-5.51l-74.36 74.36-67.88-11.31-11.31-67.88 74.36-74.36c6.62-6.62 3.43-17.9-5.66-20.16-47.38-11.74-99.55.91-136.58 37.93-39.64 39.64-50.55 97.1-34.05 147.2L18.74 402.76c-24.99 24.99-24.99 65.51 0 90.5 24.99 24.99 65.51 24.99 90.5 0l213.21-213.21c50.12 16.71 107.47 5.68 147.37-34.22 37.07-37.07 49.7-89.32 37.91-136.73zM64 472c-13.25 0-24-10.75-24-24 0-13.26 10.75-24 24-24s24 10.74 24 24c0 13.25-10.75 24-24 24z"/></g>
</svg>
<div class="a" style="left:238px;top:295px;width:681px;height:603.6px;background:#02020a;"></div>
<div class="a" style="left:134px;top:880.6px;width:785px;height:18px;background:#02020a;"></div>
<div class="a" style="left:135px;top:326.8px;width:103.3px;height:128.4px;background:#282932;border:1.6px solid #5e5e62;"></div>
<div class="a" style="left:135px;top:359.0px;width:103px;height:1.6px;background:#5e5e62;"></div>
<div class="a" style="left:135px;top:391.0px;width:103px;height:1.6px;background:#5e5e62;"></div>
<div class="a" style="left:135px;top:423.1px;width:103px;height:1.6px;background:#5e5e62;"></div>
<div class="t" style="left:135px;top:335.1px;width:94.6px;text-align:right;font-size:17.4px">Tempo</div>
<div class="t" style="left:241.5px;top:335.3px;font-size:17px;color:#fff;">120.0</div>
<div class="t" style="left:135px;top:367.1px;width:94.6px;text-align:right;font-size:17.4px">Beat</div>
<div class="t" style="left:241.5px;top:367.3px;font-size:17px;color:#fff;">4/4</div>
<div class="t" style="left:135px;top:399.1px;width:94.6px;text-align:right;font-size:17.4px">Key</div>
<div class="t" style="left:241.5px;top:399.3px;font-size:17px;color:#fff;">C</div>
<div class="t" style="left:135px;top:431.1px;width:94.6px;text-align:right;font-size:17.4px">Dynamics</div>
<div class="t" style="left:241.5px;top:431.3px;font-size:17px;color:#fff;">N</div>
<svg style="left:0;top:0" width="1280" height="930" viewBox="0 0 1280 930"><rect x="238" y="327.29999999999995" width="663" height="1.3" fill="#5a5a5e"/><rect x="238" y="359.29999999999995" width="663" height="1.3" fill="#5a5a5e"/><rect x="238" y="391.29999999999995" width="663" height="1.3" fill="#5a5a5e"/><rect x="238" y="423.29999999999995" width="663" height="1.3" fill="#5a5a5e"/><rect x="267.09999999999997" y="318" width="1.3" height="9" fill="#5a5a5e"/><rect x="267.09999999999997" y="350" width="1.3" height="9" fill="#5a5a5e"/><rect x="267.09999999999997" y="382" width="1.3" height="9" fill="#5a5a5e"/><rect x="267.09999999999997" y="414" width="1.3" height="9" fill="#5a5a5e"/><rect x="267.09999999999997" y="446" width="1.3" height="9" fill="#5a5a5e"/><rect x="366.84999999999997" y="318" width="1.3" height="9" fill="#5a5a5e"/><rect x="366.84999999999997" y="350" width="1.3" height="9" fill="#5a5a5e"/><rect x="366.84999999999997" y="382" width="1.3" height="9" fill="#5a5a5e"/><rect x="366.84999999999997" y="414" width="1.3" height="9" fill="#5a5a5e"/><rect x="366.84999999999997" y="446" width="1.3" height="9" fill="#5a5a5e"/><rect x="466.59999999999997" y="318" width="1.3" height="9" fill="#5a5a5e"/><rect x="466.59999999999997" y="350" width="1.3" height="9" fill="#5a5a5e"/><rect x="466.59999999999997" y="382" width="1.3" height="9" fill="#5a5a5e"/><rect x="466.59999999999997" y="414" width="1.3" height="9" fill="#5a5a5e"/><rect x="466.59999999999997" y="446" width="1.3" height="9" fill="#5a5a5e"/><rect x="565.5500000000001" y="295" width="2.4" height="160" fill="#4c4c50"/><rect x="666.1" y="318" width="1.3" height="9" fill="#5a5a5e"/><rect x="666.1" y="350" width="1.3" height="9" fill="#5a5a5e"/><rect x="666.1" y="382" width="1.3" height="9" fill="#5a5a5e"/><rect x="666.1" y="414" width="1.3" height="9" fill="#5a5a5e"/><rect x="666.1" y="446" width="1.3" height="9" fill="#5a5a5e"/><rect x="765.0500000000001" y="295" width="2.4" height="160" fill="#4c4c50"/><rect x="865.6" y="318" width="1.3" height="9" fill="#5a5a5e"/><rect x="865.6" y="350" width="1.3" height="9" fill="#5a5a5e"/><rect x="865.6" y="382" width="1.3" height="9" fill="#5a5a5e"/><rect x="865.6" y="414" width="1.3" height="9" fill="#5a5a5e"/><rect x="865.6" y="446" width="1.3" height="9" fill="#5a5a5e"/><text class="w" x="573.5" y="319.6" font-size="17" fill="#fff" font-family="Liberation Sans, sans-serif">2</text><text class="w" x="773.5" y="319.6" font-size="17" fill="#fff" font-family="Liberation Sans, sans-serif">3</text><defs><clipPath id="gc"><rect x="238.3" y="454.8" width="662.7" height="425.8"/></clipPath><linearGradient id="ng" x1="0" y1="0" x2="0" y2="1"><stop offset="0" stop-color="#ffa91e"/><stop offset="1" stop-color="#ef7700"/></linearGradient></defs><g clip-path="url(#gc)"><rect x="238" y="447.85" width="664" height="28.80" fill="#62473b"/><rect x="238" y="447.85" width="328.95" height="28.80" fill="#80655c"/><rect x="238" y="476.60" width="664" height="28.80" fill="#4e5e44"/><rect x="238" y="505.35" width="664" height="28.80" fill="#2f363e"/><rect x="238" y="534.10" width="664" height="28.80" fill="#38525f"/><rect x="566.95" y="534.10" width="335" height="28.80" fill="#567588"/><rect x="238" y="562.85" width="664" height="28.80" fill="#2d2f3f"/><rect x="238" y="591.60" width="664" height="28.80" fill="#3f3b63"/><rect x="238" y="620.35" width="664" height="28.80" fill="#2e2c3e"/><rect x="238" y="649.10" width="664" height="28.80" fill="#4a3c5e"/><rect x="238" y="677.85" width="664" height="28.80" fill="#543f5e"/><rect x="238" y="706.60" width="664" height="28.80" fill="#3a2f3c"/><rect x="238" y="735.35" width="664" height="28.80" fill="#5b3848"/><rect x="238" y="764.10" width="664" height="28.80" fill="#3a2e33"/><rect x="238" y="792.85" width="664" height="28.80" fill="#62473b"/><rect x="238" y="792.85" width="328.95" height="28.80" fill="#80655c"/><rect x="238" y="821.60" width="664" height="28.80" fill="#4e5e44"/><rect x="238" y="850.35" width="664" height="28.80" fill="#2f363e"/><rect x="238" y="879.10" width="664" height="28.80" fill="#38525f"/><rect x="566.95" y="879.10" width="335" height="28.80" fill="#567588"/><rect x="238" y="474.70" width="664" height="2.8" fill="#626262"/><rect x="238" y="504.75" width="664" height="1.2" fill="#9a9a9a" fill-opacity="0.3"/><rect x="238" y="533.50" width="664" height="1.2" fill="#9a9a9a" fill-opacity="0.3"/><rect x="238" y="562.25" width="664" height="1.2" fill="#9a9a9a" fill-opacity="0.3"/><rect x="238" y="591.00" width="664" height="1.2" fill="#9a9a9a" fill-opacity="0.3"/><rect x="238" y="619.75" width="664" height="1.2" fill="#9a9a9a" fill-opacity="0.3"/><rect x="238" y="648.50" width="664" height="1.2" fill="#9a9a9a" fill-opacity="0.3"/><rect x="238" y="677.25" width="664" height="1.2" fill="#9a9a9a" fill-opacity="0.3"/><rect x="238" y="706.00" width="664" height="1.2" fill="#9a9a9a" fill-opacity="0.3"/><rect x="238" y="734.75" width="664" height="1.2" fill="#9a9a9a" fill-opacity="0.3"/><rect x="238" y="763.50" width="664" height="1.2" fill="#9a9a9a" fill-opacity="0.3"/><rect x="238" y="792.25" width="664" height="1.2" fill="#9a9a9a" fill-opacity="0.3"/><rect x="238" y="819.70" width="664" height="2.8" fill="#626262"/><rect x="238" y="849.75" width="664" height="1.2" fill="#9a9a9a" fill-opacity="0.3"/><rect x="238" y="878.50" width="664" height="1.2" fill="#9a9a9a" fill-opacity="0.3"/><rect x="241.91" y="450" width="1.7" height="440" fill="#383838" fill-opacity="0.78"/><rect x="266.70" y="450" width="2" height="440" fill="#525252"/><rect x="291.79" y="450" width="1.7" height="440" fill="#383838" fill-opacity="0.78"/><rect x="316.72" y="450" width="1.7" height="440" fill="#383838" fill-opacity="0.78"/><rect x="341.66" y="450" width="1.7" height="440" fill="#383838" fill-opacity="0.78"/><rect x="366.45" y="450" width="2" height="440" fill="#525252"/><rect x="391.54" y="450" width="1.7" height="440" fill="#383838" fill-opacity="0.78"/><rect x="416.47" y="450" width="1.7" height="440" fill="#383838" fill-opacity="0.78"/><rect x="441.41" y="450" width="1.7" height="440" fill="#383838" fill-opacity="0.78"/><rect x="466.20" y="450" width="2" height="440" fill="#525252"/><rect x="491.29" y="450" width="1.7" height="440" fill="#383838" fill-opacity="0.78"/><rect x="516.23" y="450" width="1.7" height="440" fill="#383838" fill-opacity="0.78"/><rect x="541.16" y="450" width="1.7" height="440" fill="#383838" fill-opacity="0.78"/><rect x="565.75" y="450" width="2.4" height="440" fill="#606060"/><rect x="591.04" y="450" width="1.7" height="440" fill="#383838" fill-opacity="0.78"/><rect x="615.98" y="450" width="1.7" height="440" fill="#383838" fill-opacity="0.78"/><rect x="640.91" y="450" width="1.7" height="440" fill="#383838" fill-opacity="0.78"/><rect x="665.70" y="450" width="2" height="440" fill="#525252"/><rect x="690.79" y="450" width="1.7" height="440" fill="#383838" fill-opacity="0.78"/><rect x="715.73" y="450" width="1.7" height="440" fill="#383838" fill-opacity="0.78"/><rect x="740.66" y="450" width="1.7" height="440" fill="#383838" fill-opacity="0.78"/><rect x="765.25" y="450" width="2.4" height="440" fill="#606060"/><rect x="790.54" y="450" width="1.7" height="440" fill="#383838" fill-opacity="0.78"/><rect x="815.48" y="450" width="1.7" height="440" fill="#383838" fill-opacity="0.78"/><rect x="840.41" y="450" width="1.7" height="440" fill="#383838" fill-opacity="0.78"/><rect x="865.20" y="450" width="2" height="440" fill="#525252"/><rect x="890.29" y="450" width="1.7" height="440" fill="#383838" fill-opacity="0.78"/></g><rect x="268.10" y="793.05" width="98.95" height="28.55" fill="url(#ng)"/><text class="w" x="270.10" y="781.45" font-size="18" letter-spacing="0.5" fill="#fff" font-family="Liberation Sans, sans-serif">d,o</text><text class="d" x="270.10" y="812.65" font-size="14.4" fill="#1a1000" font-family="Liberation Sans, Noto Sans CJK JP, sans-serif">ド</text><rect x="367.85" y="735.55" width="98.95" height="28.55" fill="url(#ng)"/><text class="w" x="369.85" y="723.95" font-size="18" letter-spacing="0.5" fill="#fff" font-family="Liberation Sans, sans-serif">r,e</text><text class="d" x="369.85" y="755.15" font-size="14.4" fill="#1a1000" font-family="Liberation Sans, Noto Sans CJK JP, sans-serif">レ</text><rect x="467.60" y="678.05" width="98.95" height="28.55" fill="url(#ng)"/><text class="w" x="469.60" y="666.45" font-size="18" letter-spacing="0.5" fill="#fff" font-family="Liberation Sans, sans-serif">m,i</text><text class="d" x="469.60" y="697.65" font-size="14.4" fill="#1a1000" font-family="Liberation Sans, Noto Sans CJK JP, sans-serif">ミ</text><rect x="567.35" y="649.30" width="98.95" height="28.55" fill="url(#ng)"/><text class="w" x="569.35" y="637.70" font-size="18" letter-spacing="0.5" fill="#fff" font-family="Liberation Sans, sans-serif">r,a</text><text class="d" x="569.35" y="668.90" font-size="14.4" fill="#1a1000" font-family="Liberation Sans, Noto Sans CJK JP, sans-serif">ラ</text><rect x="667.10" y="591.80" width="98.95" height="28.55" fill="url(#ng)"/><text class="w" x="669.10" y="580.20" font-size="18" letter-spacing="0.5" fill="#fff" font-family="Liberation Sans, sans-serif">sh,i</text><text class="d" x="669.10" y="611.40" font-size="14.4" fill="#1a1000" font-family="Liberation Sans, Noto Sans CJK JP, sans-serif">シ</text><rect x="766.85" y="534.30" width="98.95" height="28.55" fill="url(#ng)"/><text class="w" x="768.85" y="522.70" font-size="18" letter-spacing="0.5" fill="#fff" font-family="Liberation Sans, sans-serif">d,o</text><text class="d" x="768.85" y="553.90" font-size="14.4" fill="#1a1000" font-family="Liberation Sans, Noto Sans CJK JP, sans-serif">ド</text><rect x="866.60" y="476.80" width="34.40" height="28.55" fill="url(#ng)"/><text class="w" x="868.60" y="465.20" font-size="18" letter-spacing="0.5" fill="#fff" font-family="Liberation Sans, sans-serif">r,e</text><text class="d" x="868.60" y="496.40" font-size="14.4" fill="#1a1000" font-family="Liberation Sans, Noto Sans CJK JP, sans-serif">レ</text><rect x="603" y="598.8" width="28.4" height="28.2" rx="4" fill="#2a2a3a" fill-opacity="0.85"/><g stroke="#dcdce2" stroke-width="1.25" fill="none" stroke-linejoin="miter" stroke-linecap="round"><path d="M627.8 601.6 L617.2 607.1 L617.2 601.8 L606.8 608.7"/><path d="M628.6 611.6 L616.6 611.4 L619.2 615 L605.6 613"/><path d="M627.8 623.4 L618.4 618.9 L616.4 623.8 L606.8 617.5"/></g><path d="M609.6 680.6 L624.4 687 L609.6 693.4" stroke="#fff" stroke-width="2" fill="none"/></svg>
<div class="a" style="left:368.3px;top:331.2px;width:50.7px;height:24px;background:linear-gradient(#ffff00,#ffd900);border-radius:4.5px"></div>
<div class="t" style="left:374.5px;top:334.7px;font-size:17px;color:#221c00;transform-origin:0 0;transform:scaleX(0.95)">110.0</div>
<div class="a" style="left:391.1px;top:295px;width:2.9px;height:160px;background:rgba(255,248,0,0.65);"></div>
<div class="a" style="left:567.8px;top:331.5px;width:50.6px;height:23.6px;background:#565656;border-radius:4px"></div>
<div class="t" style="left:573.3px;top:334.7px;font-size:17px;color:#fff;transform-origin:0 0;transform:scaleX(0.92)">100.0</div>
<div class="a" style="left:567.8px;top:363.3px;width:50.6px;height:23.6px;background:#565656;border-radius:4px"></div>
<div class="t" style="left:573.3px;top:366.5px;font-size:17px;color:#fff;transform-origin:0 0;transform:scaleX(1)">2/4</div>
<div class="a" style="left:567.8px;top:395.2px;width:50.6px;height:23.6px;background:#565656;border-radius:4px"></div>
<div class="t" style="left:573.3px;top:398.4px;font-size:17px;color:#fff;transform-origin:0 0;transform:scaleX(1)">Am</div>
<div class="a" style="left:767.4px;top:427.3px;width:50.6px;height:23.6px;background:#565656;border-radius:4px"></div>
<div class="t" style="left:772.9px;top:430.5px;font-size:17px;color:#fff;transform-origin:0 0;transform:scaleX(1)">pppp</div>
<svg style="left:0;top:0" width="1280" height="930" viewBox="0 0 1280 930"><defs><clipPath id="pc"><rect x="133.8" y="454.8" width="104.5" height="425.8"/></clipPath></defs><rect x="133.8" y="454.8" width="104.5" height="425.8" fill="#000"/><g clip-path="url(#pc)"><rect x="120" y="401.25" width="118.3" height="74.10" rx="3.5" fill="#fff"/><rect x="120" y="477.85" width="118.3" height="47.24" rx="3.5" fill="#fff"/><rect x="120" y="527.59" width="118.3" height="48.39" rx="3.5" fill="#fff"/><rect x="120" y="578.48" width="118.3" height="47.81" rx="3.5" fill="#fff"/><rect x="120" y="628.79" width="118.3" height="47.81" rx="3.5" fill="#fff"/><rect x="120" y="679.10" width="118.3" height="47.24" rx="3.5" fill="#fff"/><rect x="120" y="728.84" width="118.3" height="41.20" rx="3.5" fill="#fff"/><rect x="120" y="772.54" width="118.3" height="47.81" rx="3.5" fill="#fff"/><rect x="120" y="822.85" width="118.3" height="47.24" rx="3.5" fill="#fff"/><rect x="120" y="872.59" width="118.3" height="48.39" rx="3.5" fill="#fff"/><rect x="120" y="923.48" width="118.3" height="47.81" rx="3.5" fill="#fff"/><rect x="120" y="973.79" width="118.3" height="47.81" rx="3.5" fill="#fff"/><rect x="120" y="1024.10" width="118.3" height="47.24" rx="3.5" fill="#fff"/><rect x="120" y="1073.84" width="118.3" height="41.20" rx="3.5" fill="#fff"/><rect x="120" y="505.05" width="79.8" height="29.15" rx="3" fill="#000"/><rect x="120" y="562.55" width="79.8" height="29.15" rx="3" fill="#000"/><rect x="120" y="620.05" width="79.8" height="29.15" rx="3" fill="#000"/><rect x="120" y="706.30" width="79.8" height="29.15" rx="3" fill="#000"/><rect x="120" y="763.80" width="79.8" height="29.15" rx="3" fill="#000"/><rect x="120" y="850.05" width="79.8" height="29.15" rx="3" fill="#000"/></g><text class="d" x="209" y="467.8" font-size="16.5" fill="#222" font-family="Liberation Sans, sans-serif">C5</text><text class="d" x="208.6" y="813" font-size="16.5" fill="#222" font-family="Liberation Sans, sans-serif">C4</text></svg>
<svg style="left:0;top:0" width="1280" height="930" viewBox="0 0 1280 930">
<path d="M243 889.8 L253.6 883 V896.6 Z" fill="#f08200"/>
<rect x="263" y="882.2" width="35" height="15" rx="5" fill="#f08200"/>
<path d="M672.4 889.8 L662.2 883 V896.8 Z" fill="#f08200"/>
<rect x="705" y="887.4" width="168.3" height="5.2" fill="#555"/>
<rect x="786" y="881.6" width="6" height="16.4" fill="#f08200"/>
<path d="M910.3 459.4 L917.4 469.6 H903.2 Z" fill="#f08200"/>
<rect x="902" y="540.6" width="16" height="34.2" rx="5.5" fill="#f08200"/>
<path d="M910.3 652.8 L917.4 642.6 H903.2 Z" fill="#f08200"/>
<rect x="907.5" y="685.5" width="5" height="166.5" fill="#555"/>
<rect x="902" y="766" width="16.4" height="5.4" fill="#f08200"/>
</svg>
<svg style="left:0;top:0" width="1280" height="930" viewBox="0 0 1280 930"><g stroke="#e8e8e8" fill="none" stroke-width="1.5"><circle cx="685" cy="888.5" r="5.3"/><path d="M688.816 892.316 L693.9 897.4" stroke-width="2"/><path d="M682.4 888.5 H687.6" stroke-width="1.6"/></g></svg>
<svg style="left:0;top:0" width="1280" height="930" viewBox="0 0 1280 930"><g stroke="#e8e8e8" fill="none" stroke-width="1.5"><circle cx="890" cy="888.5" r="5.3"/><path d="M893.816 892.316 L898.9 897.4" stroke-width="2"/><path d="M887.4 888.5 H892.6" stroke-width="1.6"/><path d="M890 885.9 V891.1" stroke-width="1.6"/></g></svg>
<svg style="left:0;top:0" width="1280" height="930" viewBox="0 0 1280 930"><g stroke="#e8e8e8" fill="none" stroke-width="1.5"><circle cx="909.5" cy="665.5" r="5.3"/><path d="M913.316 669.316 L918.4 674.4" stroke-width="2"/><path d="M906.9 665.5 H912.1" stroke-width="1.6"/></g></svg>
<svg style="left:0;top:0" width="1280" height="930" viewBox="0 0 1280 930"><g stroke="#e8e8e8" fill="none" stroke-width="1.5"><circle cx="909" cy="870" r="5.3"/><path d="M912.816 873.816 L917.9 878.9" stroke-width="2"/><path d="M906.4 870 H911.6" stroke-width="1.6"/><path d="M909 867.4 V872.6" stroke-width="1.6"/></g></svg>
<div class="a" style="left:920px;top:295.3px;width:358px;height:603.2px;background:#282932;border:1.3px solid #5a5a5e;border-top-color:#3c3c42"></div>
<div class="t" style="left:926.5px;top:314.2px;font-size:18px;color:#fff;">Property</div>
<svg style="left:0;top:0" width="1280" height="930" viewBox="0 0 1280 930"><rect x="922.5" y="346.4" width="354" height="417.2" rx="10" fill="none" stroke="#ff0000" stroke-width="4"/></svg>
<div class="t" style="left:933.2px;top:362px;font-size:14px;font-weight:bold;-webkit-text-stroke:0;transform-origin:0 0;transform:scaleX(1.0)">Tempo</div>
<div class="t" style="left:933.2px;top:390px;font-size:12.6px;font-weight:bold;-webkit-text-stroke:0;transform-origin:0 0;transform:scaleX(0.926)">(Recommended Tempo: 80 - 145 BPM)</div>
<div class="a" style="left:1045.2px;top:415.3px;width:107px;height:26.8px;background:#282932;border:1.2px solid #a8aab4"></div>
<div class="t" style="left:1045.2px;top:421.8px;width:107px;text-align:center;font-size:14.5px;font-weight:bold;-webkit-text-stroke:0;"><span style="display:inline-block;transform:scaleX(0.93)">110.000</span></div>
<div class="a" style="left:949px;top:448.8px;width:301px;height:6px;background:#555;"></div>
<div class="a" style="left:949px;top:448.8px;width:68px;height:6px;background:#b5701e;"></div>
<div class="a" style="left:1015.8px;top:441.4px;width:8.2px;height:20.2px;background:#f08200;"></div>
<svg style="left:0;top:0" width="1280" height="930" viewBox="0 0 1280 930"><rect x="1221" y="254.2" width="43.8" height="44.7" rx="7" fill="none" stroke="#ff0000" stroke-width="4"/></svg>
</div></body></html>
